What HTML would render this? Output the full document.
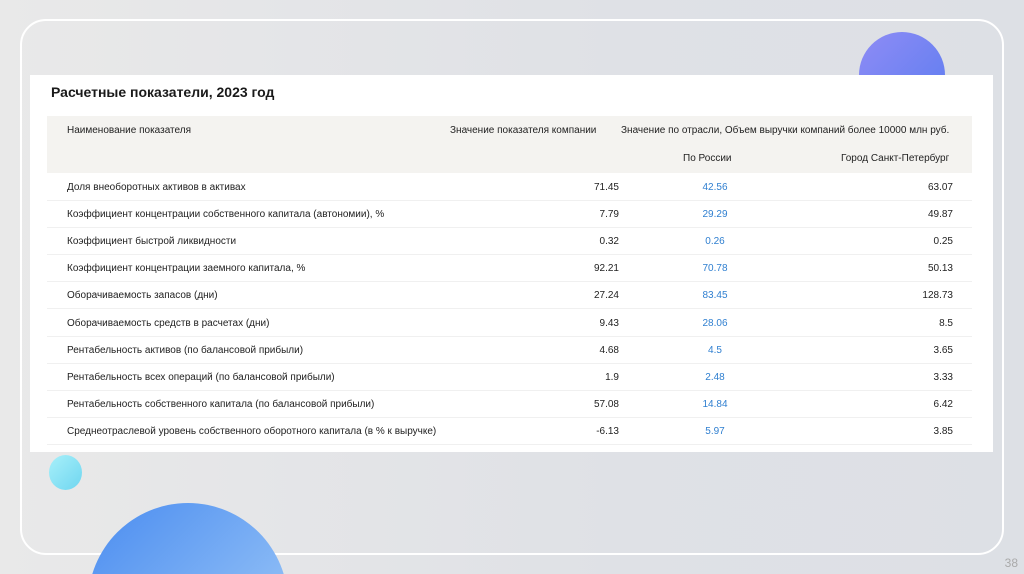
<!DOCTYPE html>
<html style="width:1024px;height:574px;overflow:hidden"><head><meta charset="utf-8"><style>
*{margin:0;padding:0;box-sizing:border-box}
body{width:1024px;height:574px;overflow:hidden;position:relative;background:linear-gradient(90deg,#e9e9e9 0%,#dfe1e6 60%,#dde0e5 100%);font-family:"Liberation Sans",sans-serif;color:#222}
.frame{position:absolute;left:20px;top:19px;width:984px;height:536px;border:2px solid #fff;border-radius:26px}
.c{position:absolute;border-radius:50%}
.panel{position:absolute;left:30px;top:75px;width:963px;height:377px;background:#fff}
h1{position:absolute;left:21px;top:9px;font-size:14px;font-weight:bold;color:#1a1a1a}
.hdr{position:absolute;left:17px;top:41px;width:925px;height:57px;background:#f4f3f0}
.t{position:absolute;font-size:10px;white-space:nowrap;line-height:12px}
.r{text-align:right}
.line{position:absolute;width:925px;height:1px;background:#f0f0f0}
.b{color:#2f7fd0}
.num{position:absolute;right:6px;top:556px;font-size:12px;line-height:14px;color:#aaa}
</style></head><body>
<div class="frame"></div>
<div class="c" style="left:859px;top:32px;width:86px;height:86px;background:linear-gradient(135deg,#8f8cf5,#5b7cf0)"></div>
<div class="c" style="left:49px;top:455px;width:33px;height:35px;background:linear-gradient(135deg,#a8f0fa,#6fd6f0)"></div>
<svg style="position:absolute;left:88px;top:503px" width="200" height="71" viewBox="0 0 200 71"><defs><linearGradient id="g" x1="0" y1="0" x2="1" y2="1"><stop offset="0" stop-color="#4a8cf0"/><stop offset="1" stop-color="#a8d0f8"/></linearGradient></defs><circle cx="100" cy="100" r="100" fill="url(#g)"/></svg>
<div class="panel">
<h1>Расчетные показатели, 2023 год</h1>
<div class="hdr"></div>
<div class="t" style="left:37px;top:50px">Наименование показателя</div>
<div class="t" style="left:420px;top:50px">Значение показателя компании</div>
<div class="t" style="left:591px;top:50px">Значение по отрасли, Объем выручки компаний более 10000 млн руб.</div>
<div class="t" style="left:653px;top:78px">По России</div>
<div class="t" style="left:811px;top:78px">Город Санкт-Петербург</div>
</div>
<div id="rows"></div>
<script>
var d=[["Доля внеоборотных активов в активах","71.45","42.56","63.07"],
["Коэффициент концентрации собственного капитала (автономии), %","7.79","29.29","49.87"],
["Коэффициент быстрой ликвидности","0.32","0.26","0.25"],
["Коэффициент концентрации заемного капитала, %","92.21","70.78","50.13"],
["Оборачиваемость запасов (дни)","27.24","83.45","128.73"],
["Оборачиваемость средств в расчетах (дни)","9.43","28.06","8.5"],
["Рентабельность активов (по балансовой прибыли)","4.68","4.5","3.65"],
["Рентабельность всех операций (по балансовой прибыли)","1.9","2.48","3.33"],
["Рентабельность собственного капитала (по балансовой прибыли)","57.08","14.84","6.42"],
["Среднеотраслевой уровень собственного оборотного капитала (в % к выручке)","-6.13","5.97","3.85"]];
var h="";
d.forEach(function(r,i){var y=182+i*27.1;
h+='<div class="t" style="left:67px;top:'+y+'px">'+r[0]+'</div>';
h+='<div class="t r" style="left:520px;width:99px;top:'+y+'px">'+r[1]+'</div>';
h+='<div class="t b" style="left:670px;width:90px;top:'+y+'px;text-align:center">'+r[2]+'</div>';
h+='<div class="t r" style="left:850px;width:103px;top:'+y+'px">'+r[3]+'</div>';
h+='<div class="line" style="left:47px;top:'+(200+i*27.1)+'px"></div>';});
document.getElementById("rows").innerHTML=h;
</script>
<div class="num">38</div>
</body></html>
